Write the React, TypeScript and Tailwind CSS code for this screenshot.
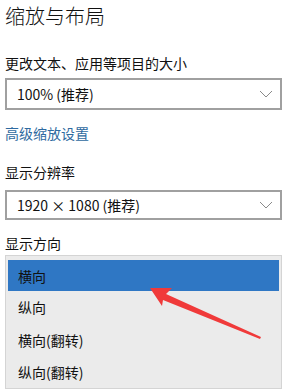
import React from 'react';

const font = { fontFamily: '"Noto Sans CJK SC", "Microsoft YaHei", sans-serif' };

function Chevron() {
  return (
    <svg width="14" height="8" viewBox="0 0 14 8" className="shrink-0">
      <polyline points="1,1 7,7 13,1" fill="none" stroke="#8a8a8a" strokeWidth="1" />
    </svg>
  );
}

function Select({ value, height }: { value: string; height: string }) {
  return (
    <div className={`flex items-center justify-between border-2 border-[#a0a0a0] bg-white pl-[10px] pr-[7px] ${height}`}>
      <span className="text-[14px] text-[#111] leading-none">{value}</span>
      <Chevron />
    </div>
  );
}

const options = ['横向', '纵向', '横向(翻转)', '纵向(翻转)'];
const rowHeights = ['h-[31px]', 'h-[32px]', 'h-[34px]', 'h-[30px]'];

export default function App() {
  return (
    <div className="relative w-[285px] h-[392px] overflow-hidden bg-white text-black" style={font}>
      <div className="px-[5px] pr-[3px] pt-[2px]">
        <h1 className="text-[20px] leading-[28px] font-light text-[#111]">缩放与布局</h1>

        <p className="mt-[23px] text-[14px] leading-[20px] text-[#111]">更改文本、应用等项目的大小</p>
        <div className="mt-[5px]">
          <Select value="100% (推荐)" height="h-[32px]" />
        </div>

        <p className="mt-[13px] text-[14px] leading-[20px] text-[#2e6aa0]">高级缩放设置</p>

        <p className="mt-[19px] text-[14px] leading-[20px] text-[#111]">显示分辨率</p>
        <div className="mt-[8px]">
          <Select value="1920 × 1080 (推荐)" height="h-[30px]" />
        </div>

        <p className="mt-[13px] text-[14px] leading-[20px] text-[#111]">显示方向</p>
        <div className="mt-[2px] border border-[#d4d4d4] bg-[#ebebeb] px-[2px] pt-[4px] pb-[1px]">
          {options.map((o, i) => (
            <div
              key={o}
              className={`flex items-center pl-[10px] text-[14px] leading-none text-[#111] ${rowHeights[i]} ${
                i === 0 ? 'bg-[#2f77c4]' : ''
              }`}
            >
              {o}
            </div>
          ))}
        </div>
      </div>

      {/* red annotation arrow */}
      <svg className="absolute left-0 top-0 pointer-events-none" width="285" height="392" viewBox="0 0 285 392">
        <polygon points="150,288 172,288 166,294 261,337 260,339 163,300 162,306" fill="#f03a3a" />
      </svg>
    </div>
  );
}
